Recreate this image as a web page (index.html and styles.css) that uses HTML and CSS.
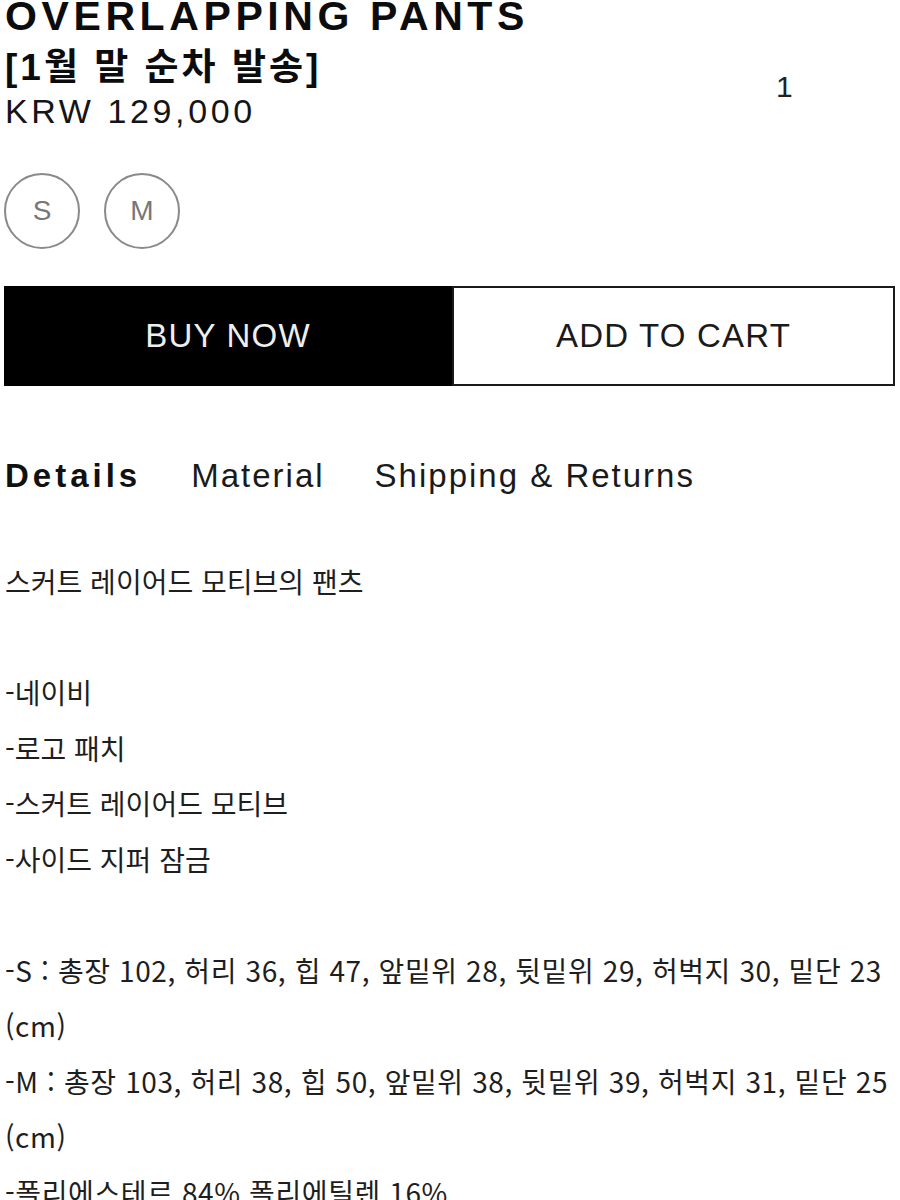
FILE: index.html
```html
<!DOCTYPE html>
<html lang="ko">
<head>
<meta charset="utf-8">
<link rel="stylesheet" href="styles.css">
</head>
<body>
<main class="page">
  <header class="product-head">
    <div class="title-block">
      <h1 class="title">OVERLAPPING PANTS</h1>
      <p class="subtitle">[1월 말 순차 발송]</p>
      <p class="price">KRW 129,000</p>
    </div>
    <div class="qty">1</div>
  </header>

  <div class="sizes">
    <button class="size">S</button>
    <button class="size">M</button>
  </div>

  <div class="actions">
    <button class="btn btn-buy">BUY NOW</button>
    <button class="btn btn-cart">ADD TO CART</button>
  </div>

  <nav class="tabs">
    <span class="tab active">Details</span>
    <span class="tab">Material</span>
    <span class="tab">Shipping &amp; Returns</span>
  </nav>

  <section class="details">
    <p class="line">스커트 레이어드 모티브의 팬츠</p>
    <p class="line blank">&nbsp;</p>
    <p class="line">-네이비</p>
    <p class="line">-로고 패치</p>
    <p class="line">-스커트 레이어드 모티브</p>
    <p class="line">-사이드 지퍼 잠금</p>
    <p class="line blank">&nbsp;</p>
    <p class="line measure">-S : 총장 102, 허리 36, 힙 47, 앞밑위 28, 뒷밑위 29, 허벅지 30, 밑단 23<br>(cm)</p>
    <p class="line measure">-M : 총장 103, 허리 38, 힙 50, 앞밑위 38, 뒷밑위 39, 허벅지 31, 밑단 25<br>(cm)</p>
    <p class="line measure">-폴리에스테르 84% 폴리에틸렌 16%</p>
  </section>
</main>
</body>
</html>
```

FILE: styles.css
```css
* { box-sizing: border-box; }
html, body { margin: 0; padding: 0; background: #fff; }
body {
  font-family: "Liberation Sans", "Noto Sans CJK KR", sans-serif;
  color: #111;
  width: 900px;
  height: 1200px;
  overflow: hidden;
}
.page { padding: 0 5px 0 5px; }

.product-head {
  display: grid;
  grid-template-columns: 771px auto;
}
.title {
  margin: -7px 0 0 0;
  font-size: 41px;
  line-height: 46px;
  font-weight: 700;
  letter-spacing: 4.6px;
  white-space: nowrap;
  color: #0c0c0c;
}
.subtitle {
  margin: 4px 0 0 0;
  font-size: 37px;
  line-height: 50px;
  font-weight: 700;
  letter-spacing: 3px;
  color: #0c0c0c;
}
.price {
  margin: -2px 0 0 0;
  font-size: 34px;
  line-height: 40px;
  letter-spacing: 3.6px;
  color: #151515;
}
.qty {
  padding-top: 72px;
  font-size: 30px;
  line-height: 30px;
  color: #222;
}

.sizes {
  display: flex;
  gap: 24px;
  margin-top: 42px;
  margin-left: -1px;
}
.size {
  width: 76px;
  height: 76px;
  border-radius: 50%;
  border: 2px solid #8a8a8a;
  background: #fff;
  color: #777;
  font-family: "Liberation Sans", sans-serif;
  font-size: 28px;
  padding: 0;
  display: flex;
  align-items: center;
  justify-content: center;
}

.actions {
  display: grid;
  grid-template-columns: 448px 443px;
  margin-top: 37px;
  margin-left: -1px;
  height: 100px;
}
.btn {
  font-family: "Liberation Sans", sans-serif;
  font-size: 33px;
  letter-spacing: 1.2px;
  padding: 0;
  display: flex;
  align-items: center;
  justify-content: center;
}
.btn-buy {
  background: #000;
  color: #eee;
  border: 2px solid #000;
}
.btn-cart {
  background: #fff;
  color: #1a1a1a;
  border: 2px solid #1a1a1a;
}

.tabs {
  display: flex;
  gap: 50px;
  margin-top: 72px;
  font-size: 33px;
  line-height: 36px;
  letter-spacing: 2px;
}
.tab { color: #1a1a1a; }
.tab.active { font-weight: 700; letter-spacing: 4px; color: #111; }

.details {
  margin-top: 60px;
  font-family: "Noto Sans CJK KR", "Liberation Sans", sans-serif;
  font-size: 28px;
  color: #1e1e1e;
}
.line {
  margin: 0;
  line-height: 55.5px;
}
.measure { letter-spacing: 0.6px; }
```
